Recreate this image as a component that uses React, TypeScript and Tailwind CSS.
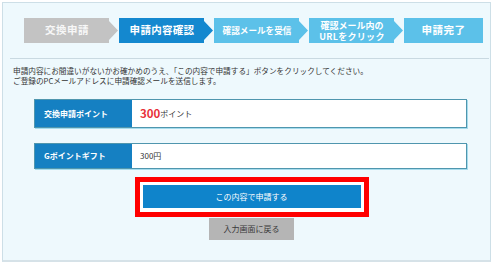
import React from "react";

const font = { fontFamily: '"Noto Sans CJK JP", "Noto Sans", sans-serif' };

function Step({
  color,
  children,
  arrow = true,
  w,
  className = "",
}: {
  color: string;
  children: React.ReactNode;
  arrow?: boolean;
  w: string;
  className?: string;
}) {
  return (
    <div
      className={`${w} h-[25px] flex items-center text-white font-bold ${color} ${className}`}
      style={
        arrow
          ? {
              clipPath:
                "polygon(0 0, calc(100% - 9px) 0, calc(100% - 9px) 3px, 100% 50%, calc(100% - 9px) calc(100% - 3px), calc(100% - 9px) 100%, 0 100%)",
            }
          : undefined
      }
    >
      <div className={`${arrow ? "w-[86px]" : "w-full"} flex flex-col items-center justify-center text-center`}>
        {children}
      </div>
    </div>
  );
}

export default function App() {
  return (
    <div className="w-[500px] h-[264px] bg-white overflow-hidden" style={font}>
      <div className="ml-[2px] mt-[2px] w-[489px] h-[260px] border border-[#cddfe7] border-b-2 border-b-[#d6e2e8] bg-[#eef9fd] flex flex-col">
        {/* steps */}
        <div className="mt-[15px] ml-[21px] flex gap-[1px]">
          <Step w="w-[94px]" color="bg-[#c3c3c3]">
            <span className="text-[10.5px] leading-none tracking-[0.5px] text-[#f7f7f7]">交換申請</span>
          </Step>
          <Step w="w-[94px]" color="bg-[#1488cf]">
            <span className="text-[10.5px] leading-none tracking-[0.3px]">申請内容確認</span>
          </Step>
          <Step w="w-[94px]" color="bg-[#5cc1e9]">
            <span className="text-[8.6px] leading-none">確認メールを受信</span>
          </Step>
          <Step w="w-[94px]" color="bg-[#5cc1e9]">
            <span className="text-[9px] leading-[11px]">確認メール内の</span>
            <span className="text-[9px] leading-[11px] tracking-[0.3px]">URLをクリック</span>
          </Step>
          <Step w="w-[79px]" color="bg-[#5cc1e9]" arrow={false}>
            <span className="text-[10.5px] leading-none tracking-[0.5px]">申請完了</span>
          </Step>
        </div>

        {/* separator */}
        <div className="mt-[15px] ml-[7px] mr-[1px] h-[1px] bg-[#c9d9e1]" />

        {/* description */}
        <div className="mt-[7px] ml-[10px] text-[7.65px] leading-[9.5px] text-[#333]">
          <p>申請内容にお間違いがないかお確かめのうえ、「この内容で申請する」ボタンをクリックしてください。</p>
          <p>ご登録のPCメールアドレスに申請確認メールを送信します。</p>
        </div>

        {/* rows */}
        <div className="mt-[14px] ml-[31px] w-[433px] flex flex-col gap-[15px]">
          <div className="h-[29px] flex border border-[#4f96ae] shadow-[1px_1px_0_#a6dced]">
            <div className="w-[97px] bg-[#1580c2] flex items-center pl-[9px] text-white font-bold text-[8px]">
              交換申請ポイント
            </div>
            <div className="flex-1 bg-white flex items-center pl-[8px] text-[#333]">
              <span className="text-[11.5px] font-bold text-[#e8313a] leading-none">300</span>
              <span className="text-[8px] leading-none mt-[1px]">ポイント</span>
            </div>
          </div>
          <div className="h-[26px] flex border border-[#4f96ae] shadow-[1px_1px_0_#a6dced]">
            <div className="w-[97px] bg-[#1580c2] flex items-center pl-[9px] text-white font-bold text-[8px]">
              Gポイントギフト
            </div>
            <div className="flex-1 bg-white flex items-center pl-[8px] text-[8px] text-[#333]">
              300円
            </div>
          </div>
        </div>

        {/* buttons */}
        <div className="mt-[8px] flex flex-col items-center">
          <div className="ml-[10px] w-[234px] h-[40px] border-[5px] border-[#ff0000] bg-white p-[3px] pb-[4px]">
            <div className="w-full h-full bg-[#0f84cb] flex items-center justify-center text-white text-[8px]">
              この内容で申請する
            </div>
          </div>
          <div className="mt-[1px] ml-[10px] w-[85px] h-[22px] bg-[#b5b5b5] flex items-center justify-center text-[8px] text-[#3a3a3a]">
            入力画面に戻る
          </div>
        </div>
      </div>
    </div>
  );
}
